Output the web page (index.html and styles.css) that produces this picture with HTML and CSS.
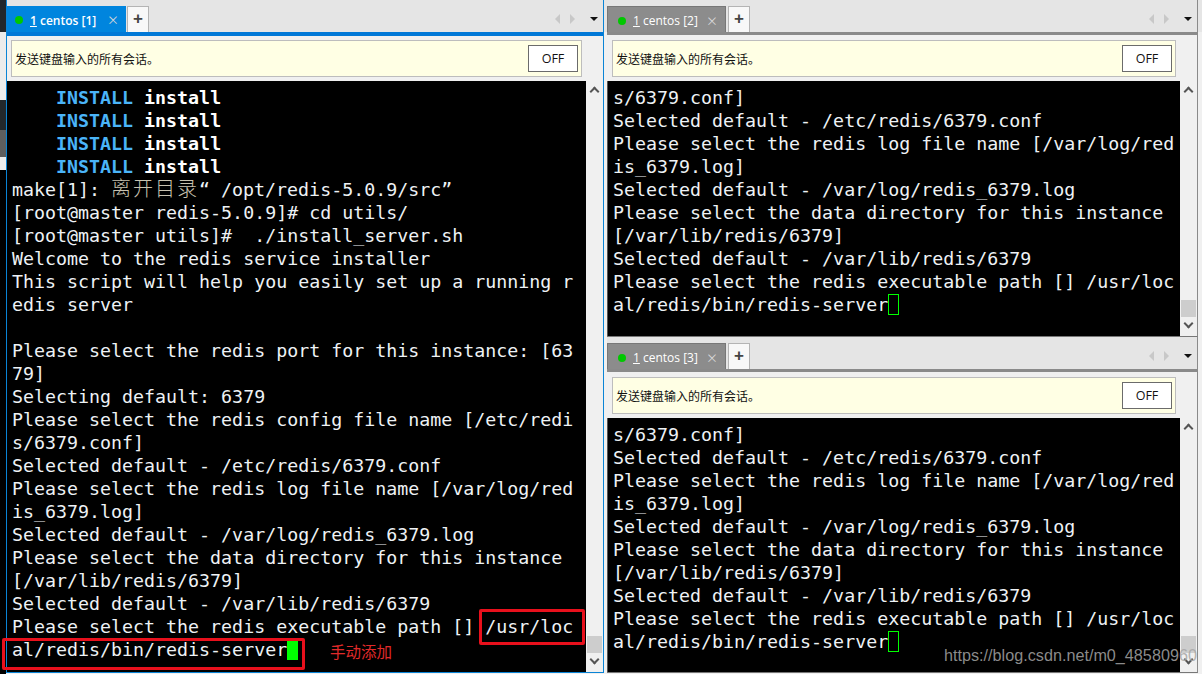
FILE: index.html
```html
<!DOCTYPE html>
<html lang="zh">
<head>
<meta charset="utf-8">
<title>centos</title>
<link rel="stylesheet" href="styles.css">
</head>
<body>
<div class="desktop">
  <div class="strip">
    <span class="seg seg-a"></span><span class="seg seg-b"></span><span class="seg seg-c"></span><span class="seg seg-d"></span><span class="seg seg-b2"></span><span class="seg seg-e"></span>
  </div>
  <section class="pane pane-main">
    <div class="tabbar">
      <div class="tab tab-active"><i class="dot"></i><span class="tab-label"><u>1</u> centos [1]</span><span class="tab-x">×</span></div>
      <div class="tab-add">+</div>
      <div class="tab-nav"><i class="tri tri-l"></i><i class="tri tri-r"></i><i class="tri-d"></i></div>
    </div>
    <div class="notice"><span class="notice-text">发送键盘输入的所有会话。</span><span class="off">OFF</span></div>
    <div class="term-row">
      <pre class="term">    <span class="cy">INSTALL</span> <b>install</b>
    <span class="cy">INSTALL</span> <b>install</b>
    <span class="cy">INSTALL</span> <b>install</b>
    <span class="cy">INSTALL</span> <b>install</b>
make[1]: <span class="cn">离开目录</span>“ /opt/redis-5.0.9/src”
[root@master redis-5.0.9]# cd utils/
[root@master utils]#  ./install_server.sh
Welcome to the redis service installer
This script will help you easily set up a running r
edis server

Please select the redis port for this instance: [63
79]
Selecting default: 6379
Please select the redis config file name [/etc/redi
s/6379.conf]
Selected default - /etc/redis/6379.conf
Please select the redis log file name [/var/log/red
is_6379.log]
Selected default - /var/log/redis_6379.log
Please select the data directory for this instance
[/var/lib/redis/6379]
Selected default - /var/lib/redis/6379
Please select the redis executable path [] /usr/loc
al/redis/bin/redis-server<span class="cursor-solid"> </span></pre>
      <div class="scroll"><i class="chev chev-up"></i><span class="spacer"></span><span class="thumb"></span><i class="chev chev-down"></i></div>
    </div>
    <span class="mark mark-a"></span>
    <span class="mark mark-b"></span>
    <span class="note">手动添加</span>
  </section>
  <div class="col">
    <section class="pane pane-side pane-top">
      <div class="tabbar tabbar-side">
        <div class="tab tab-idle"><i class="dot"></i><span class="tab-label"><u>1</u> centos [2]</span><span class="tab-x">×</span></div>
        <div class="tab-add">+</div>
        <div class="tab-nav"><i class="tri tri-l"></i><i class="tri tri-r"></i><i class="tri-d"></i></div>
      </div>
      <div class="notice"><span class="notice-text">发送键盘输入的所有会话。</span><span class="off">OFF</span></div>
      <div class="term-row">
        <pre class="term">s/6379.conf]
Selected default - /etc/redis/6379.conf
Please select the redis log file name [/var/log/red
is_6379.log]
Selected default - /var/log/redis_6379.log
Please select the data directory for this instance
[/var/lib/redis/6379]
Selected default - /var/lib/redis/6379
Please select the redis executable path [] /usr/loc
al/redis/bin/redis-server<span class="cursor-hollow"> </span></pre>
        <div class="scroll"><i class="chev chev-up"></i><span class="spacer"></span><span class="thumb"></span><i class="chev chev-down"></i></div>
      </div>
    </section>
    <section class="pane pane-side pane-bottom">
      <div class="tabbar tabbar-side">
        <div class="tab tab-idle"><i class="dot"></i><span class="tab-label"><u>1</u> centos [3]</span><span class="tab-x">×</span></div>
        <div class="tab-add">+</div>
        <div class="tab-nav"><i class="tri tri-l"></i><i class="tri tri-r"></i><i class="tri-d"></i></div>
      </div>
      <div class="notice"><span class="notice-text">发送键盘输入的所有会话。</span><span class="off">OFF</span></div>
      <div class="term-row">
        <pre class="term">s/6379.conf]
Selected default - /etc/redis/6379.conf
Please select the redis log file name [/var/log/red
is_6379.log]
Selected default - /var/log/redis_6379.log
Please select the data directory for this instance
[/var/lib/redis/6379]
Selected default - /var/lib/redis/6379
Please select the redis executable path [] /usr/loc
al/redis/bin/redis-server<span class="cursor-hollow"> </span></pre>
        <div class="scroll"><i class="chev chev-up"></i><span class="spacer"></span><span class="thumb"></span><i class="chev chev-down"></i></div>
      </div>
    </section>
  </div>
  <span class="watermark">https://blog.csdn.net/m0_48580960</span>
</div>
</body>
</html>
```
FILE: styles.css
```css
* { box-sizing: border-box; }
html, body { margin: 0; padding: 0; }
body { width: 1202px; height: 674px; overflow: hidden; background: #f0f0f0; }

.desktop {
  position: relative;
  display: flex;
  align-items: flex-start;
  width: 1202px;
  height: 674px;
  background: linear-gradient(#e5e5e5 32px, #f0f0f0 32px);
  font-family: "Noto Sans CJK SC", "Noto Sans", sans-serif;
}

.strip { width: 6px; height: 674px; flex: none; display: flex; flex-direction: column; }
.seg { display: block; flex: none; }
.seg-a { height: 32px; background: #22272b; }
.seg-b { height: 68px; background: #ececec; }
.seg-c { height: 30px; background: #22272b; }
.seg-d { height: 27px; background: #5e5e5e; }
.seg-b2 { height: 13px; background: #ececec; }
.seg-e { flex: 1; background: #000; }

.pane { position: relative; display: flex; flex-direction: column; background: #f0f0f0; }
.pane-main {
  width: 598px;
  height: 673px;
  flex: none;
  border-left: 1px solid #0a84d6;
  border-right: 1px solid #0a84d6;
  border-bottom: 1px solid #0a84d6;
}
.col { width: 591px; flex: none; margin-left: 3px; display: flex; flex-direction: column; }
.pane-side { border-right: 1px solid #8a8a8a; border-bottom: 1px solid #777; }
.pane-top { height: 337px; }
.pane-bottom { height: 336px; }

.tabbar {
  display: flex;
  align-items: flex-end;
  height: 36px;
  padding-top: 6px;
  flex: none;
  background: #e5e5e5;
  border-bottom: 4px solid #0078d7;
}
.tabbar-side { border-bottom: 3px solid #8a8a8a; height: 35px; margin-bottom: 1px; }

.tab {
  display: flex;
  align-items: center;
  height: 26px;
  padding-left: 8px;
  padding-top: 2px;
  width: 119px;
  flex: none;
  font-size: 12px;
}
.tab-active { background: #0085de; color: #fff; font-weight: 600; }
.tab-idle { background: #8c8c8c; color: #fff; border: 1px solid #777; border-bottom: 0; padding-left: 10px; }

.dot { width: 8px; height: 8px; border-radius: 50%; background: #00c800; flex: none; margin-right: 7px; }
.tab-label { white-space: nowrap; font-family: "Open Sans", "Noto Sans", sans-serif; }
.tab-x { margin-left: auto; margin-right: 7px; font-size: 12px; font-weight: 400; color: #d8d8d8; line-height: 1; }

.tab-add {
  width: 22px;
  height: 26px;
  margin-left: 1px;
  flex: none;
  background: #f8f8f8;
  border: 1px solid #b4b4b4;
  border-bottom: 0;
  color: #444;
  font: bold 17px/24px "Liberation Sans", sans-serif;
  text-align: center;
}
.tabbar-side .tab-add { margin-left: 2px; }

.tab-nav { margin-left: auto; height: 26px; display: flex; align-items: center; padding-right: 5px; }
.tri { width: 0; height: 0; border-top: 5px solid transparent; border-bottom: 5px solid transparent; }
.tri-l { border-right: 5px solid #c8c8c8; margin-right: 10px; }
.tri-r { border-left: 5px solid #c8c8c8; margin-right: 15px; }
.tri-d { width: 0; height: 0; border-left: 4px solid transparent; border-right: 4px solid transparent; border-top: 4px solid #111; }

.notice {
  flex: none;
  display: flex;
  align-items: center;
  justify-content: space-between;
  height: 37px;
  margin: 4px 21px 4px 4px;
  padding: 0 3px 0 3px;
  background: #ffffe4;
  border: 1px solid #bdbdbd;
}
.pane-side .notice { margin-left: 5px; }
.notice-text { font-size: 12px; color: #111; }
.off {
  width: 50px;
  height: 27px;
  background: #fff;
  border: 1px solid #6b6b6b;
  color: #111;
  font: 12.5px/25px "Open Sans", sans-serif;
  text-align: center;
}

.term-row { flex: 1; min-height: 0; display: flex; }
.term {
  flex: 1;
  min-width: 0;
  margin: 0;
  padding: 5px 0 0 5px;
  overflow: hidden;
  background: #000;
  color: #eef2f5;
  font: 18.3px/23px "DejaVu Sans Mono", monospace;
  white-space: pre;
}
.pane-side .term { padding-left: 5px; border-left: 1px solid #555; }
.term b { color: #fff; font-weight: 700; }
.cy { color: #4ab4f8; font-weight: 700; }
.cn { font-family: "Noto Sans CJK SC", sans-serif; font-size: 20px; line-height: 0; letter-spacing: 2px; font-weight: 300; color: #c8c2b0; }
.cursor-solid { background: #00ff00; }
.cursor-hollow { outline: 1px solid #00ff00; outline-offset: -1px; }

.scroll { width: 17px; flex: none; display: flex; flex-direction: column; align-items: center; padding: 4px 0 6px; background: #f0f0f0; }
.spacer { flex: 1; }
.thumb { width: 15px; height: 17px; background: #cdcdcd; margin-bottom: 3px; flex: none; }
.chev { width: 7px; height: 7px; border-left: 2px solid #555; border-top: 2px solid #555; flex: none; }
.chev-up { transform: rotate(45deg); margin-top: 3px; }
.chev-down { transform: rotate(225deg); margin-bottom: 3px; }

.mark { position: absolute; border: 3px solid #e8101c; border-radius: 2px; }
.mark-a { left: 472px; top: 609px; width: 106px; height: 36px; }
.mark-b { left: -5px; top: 638px; width: 303px; height: 32px; }
.note { position: absolute; left: 323px; top: 642px; font-size: 15.5px; line-height: 18px; color: #e02a2a; }

.watermark {
  position: absolute;
  left: 944px;
  top: 645px;
  font: 16.2px/20px "Liberation Sans", sans-serif;
  color: rgba(165,165,165,.85);
  white-space: nowrap;
}
```
